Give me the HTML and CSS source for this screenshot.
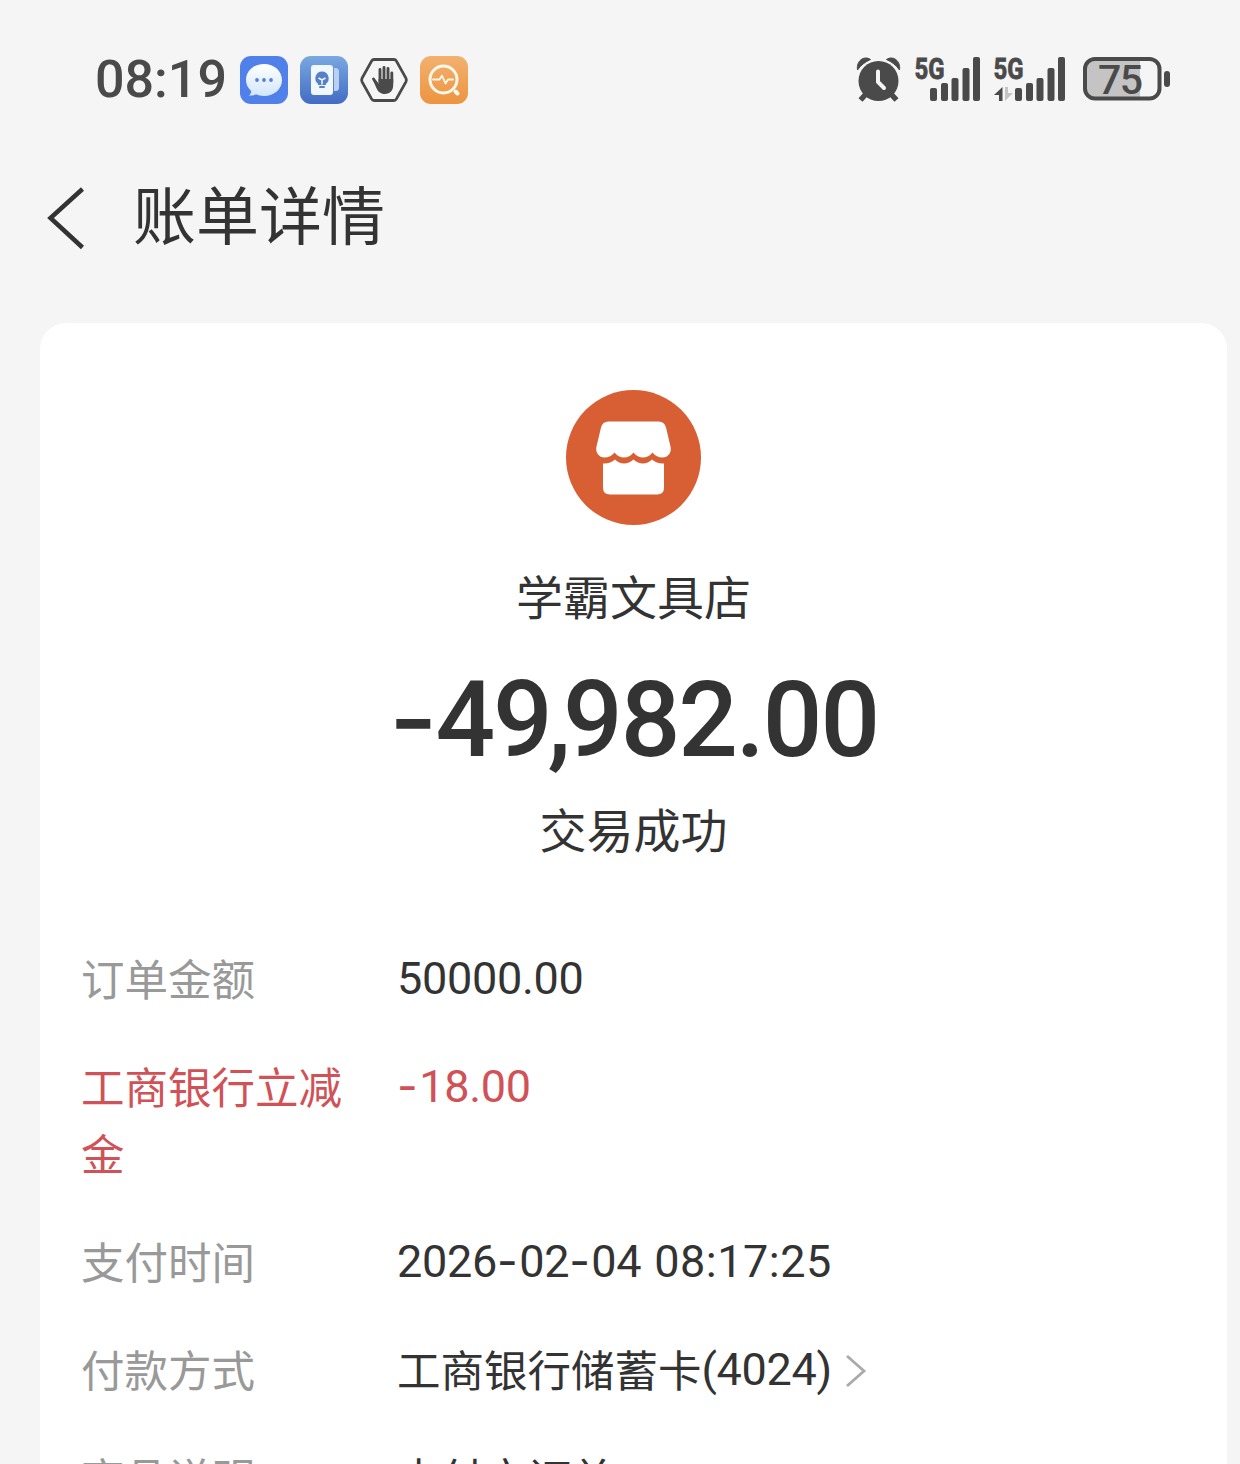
FILE: index.html
```html
<!DOCTYPE html>
<html lang="zh-CN">
<head>
    <meta charset="UTF-8">
    <title>账单详情</title>
    <link rel="stylesheet" href="styles.css">
</head>
<body>
    <div class="status-bar">
        <div class="status-left">
            <span class="clock">08:19</span>
            <svg class="app-icon" viewBox="0 0 48 48">
                <defs>
                    <linearGradient id="bubble" x1="0" y1="0" x2="0" y2="1">
                        <stop offset="0" stop-color="#fff"/>
                        <stop offset="1" stop-color="#d3e6fd"/>
                    </linearGradient>
                </defs>
                <rect width="48" height="48" rx="11" fill="#5080ea"/>
                <path d="M24 8c10.200 0 18 6.900 18 16s-7.800 16-18 16c-3 0-5.500-.6-8-1.700-1.800 1.200-4.300 1.500-7 1.200 1.600-1.200 2.200-2.800 2.200-4.500C7.800 32 6 28.300 6 24 6 14.900 13.800 8 24 8z" fill="url(#bubble)"/>
                <circle cx="17" cy="24" r="1.900" fill="#5282d8"/>
                <circle cx="24" cy="24" r="1.900" fill="#5282d8"/>
                <circle cx="31" cy="24" r="1.900" fill="#5282d8"/>
            </svg>
            <svg class="app-icon" viewBox="0 0 48 48">
                <defs>
                    <linearGradient id="tips" x1="0" y1="0" x2="0" y2="1">
                        <stop offset="0" stop-color="#7aa8e0"/>
                        <stop offset="1" stop-color="#416cc4"/>
                    </linearGradient>
                </defs>
                <rect width="48" height="48" rx="11" fill="url(#tips)"/>
                <path d="M34 12h1.500q3.500 0 3.500 3.500v16q0 3.500-3.500 3.500H34z" fill="#b9d0f2"/>
                <rect x="11" y="9" width="22" height="30" rx="3" fill="#f1f7ff"/>
                <path d="M22 15.500a6.800 6.800 0 0 1 4 12.200V29h-8v-1.300a6.800 6.800 0 0 1 4-12.200z" fill="#5580c8"/>
                <path d="M18.500 22l3.500 2 3.500-2M22 24v4.500" fill="none" stroke="#f1f7ff" stroke-width="1.500"/>
                <rect x="19" y="30" width="6" height="2" rx="1" fill="#5580c8"/>
            </svg>
            <svg class="app-icon" viewBox="0 0 48 48">
                <path d="M14 3.500h20q1.500 0 2.300 1.400l9.600 17.200q1 1.900 0 3.800l-9.600 17.200q-.8 1.400-2.300 1.400H14q-1.500 0-2.300-1.400L2.100 25.900q-1-1.900 0-3.800l9.600-17.200Q12.500 3.500 14 3.500z" fill="none" stroke="#4a4a4a" stroke-width="2.800"/>
                <path d="M17 28l-3.500-5M20 26V13.500M24 26V11.500M28 26V12.500M31.800 27V17" fill="none" stroke="#4a4a4a" stroke-width="2.900" stroke-linecap="round"/>
                <path d="M18.600 23h14.600v6c0 5.500-3 9-8.300 9-4.500 0-7-2.500-8.500-6l-3.300-7.500 2.500-.5 2.900 4z" fill="#4a4a4a"/>
            </svg>
            <svg class="app-icon" viewBox="0 0 48 48">
                <defs>
                    <linearGradient id="scan" x1="0" y1="0" x2="0" y2="1">
                        <stop offset="0" stop-color="#f2b16f"/>
                        <stop offset="1" stop-color="#ed9440"/>
                    </linearGradient>
                </defs>
                <rect width="48" height="48" rx="11" fill="url(#scan)"/>
                <g fill="none" stroke="#fff8ea" stroke-linecap="round">
                    <circle cx="23.500" cy="23.500" r="13.500" stroke-width="3"/>
                    <path d="M35.500 35.500l2 2" stroke-width="4"/>
                    <path d="M13 23.500h6.500l2.500-4 3.500 8 2.500-4h5" stroke-width="1.800" stroke-linejoin="round"/>
                </g>
            </svg>
        </div>
        <div class="status-right">
            <svg class="alarm" viewBox="0 0 44 46">
                <g fill="#4a4a4a">
                    <circle cx="21.500" cy="25" r="20"/>
                    <path d="M.5 14C-1 5 7-1 13.500 3.500 8 6 4 9 .5 14zM42.500 14C44 5 36-1 29.500 3.500 35 6 39 9 42.500 14z" stroke="#4a4a4a"/>
                </g>
                <path d="M9 38l-5.500 6M34 38l5.500 6" stroke="#4a4a4a" stroke-width="5.500"/>
                <path d="M21 15.500V26l6 6" fill="none" stroke="#f5f5f5" stroke-width="4" stroke-linecap="round"/>
            </svg>
            <svg class="signal signal-one" viewBox="0 0 66 46">
                <text x="-.5" y="22.500" textLength="30" lengthAdjust="spacingAndGlyphs">5G</text>
                <g fill="#4a4a4a">
                    <rect x="15" y="32" width="7" height="13" rx="2"/>
                    <rect x="26" y="27" width="7" height="18" rx="2"/>
                    <rect x="36.500" y="22" width="7" height="23" rx="2"/>
                    <rect x="47.500" y="12" width="7" height="33" rx="2"/>
                    <rect x="58" y="1" width="7" height="44" rx="2"/>
                </g>
            </svg>
            <svg class="signal signal-two" viewBox="0 0 72 46">
                <text x="-.5" y="22.500" textLength="30" lengthAdjust="spacingAndGlyphs">5G</text>
                <path d="M8.500 31v14H5v-6H0z" fill="#4a4a4a"/>
                <path d="M11 45V31h3v6h5z" fill="#c4c4c4"/>
                <g fill="#4a4a4a">
                    <rect x="21" y="32" width="7" height="13" rx="2"/>
                    <rect x="32" y="27" width="7" height="18" rx="2"/>
                    <rect x="42.500" y="22" width="7" height="23" rx="2"/>
                    <rect x="53.500" y="12" width="7" height="33" rx="2"/>
                    <rect x="64" y="1" width="7" height="44" rx="2"/>
                </g>
            </svg>
            <svg class="battery" viewBox="0 0 88 46">
                <path d="M12 3h45v40H12Q3 43 3 34V12Q3 3 12 3z" fill="#c4c4c4"/>
                <rect x="2" y="3" width="74.500" height="39.500" rx="10" fill="none" stroke="#4a4a4a" stroke-width="4"/>
                <rect x="81" y="15" width="6" height="16" rx="3" fill="#4a4a4a"/>
                <text x="15" y="38" textLength="45" lengthAdjust="spacing">75</text>
            </svg>
        </div>
    </div>

    <header class="nav">
        <svg class="back" viewBox="0 0 38 62">
            <path d="M35.500 2L3.500 31l32 29.500" fill="none" stroke="#333" stroke-width="4.500"/>
        </svg>
        <h1>账单详情</h1>
    </header>

    <main class="card">
        <div class="summary">
            <svg class="shop-logo" viewBox="0 0 135 135">
                <circle cx="67.500" cy="67.500" r="67.500" fill="#d75f33"/>
                <path d="M42.500 31.500h50q6 0 7.500 6l4.500 19c1.500 6-2.500 11-8 11q-6 0-10-5-4 5-9.500 5t-9.500-5q-4 5-9.500 5t-9.500-5q-4 5-10 5c-5.500 0-9.500-5-8-11l4.500-19q1.500-6 7.500-6z" fill="#fff"/>
                <path d="M37 73.500q7 .5 12-4 4 4 9 4t9.500-4q4.500 4 9.500 4t9-4q5 4.500 12 4v24q0 7-7 7H44q-7 0-7-7z" fill="#fff"/>
            </svg>
            <div class="shop-name">学霸文具店</div>
            <div class="amount"><span class="dash">-</span>49<span class="comma">,</span>982.00</div>
            <div class="state">交易成功</div>
        </div>

        <div class="details">
            <div class="row">
                <div class="label">订单金额</div>
                <div class="value">50000.00</div>
            </div>
            <div class="row discount">
                <div class="label">工商银行立减金</div>
                <div class="value"><span class="dash">-</span>18.00</div>
            </div>
            <div class="row">
                <div class="label">支付时间</div>
                <div class="value">2026<span class="dash">-</span>02<span class="dash">-</span>04 <span class="time">08:17:25</span></div>
            </div>
            <div class="row">
                <div class="label">付款方式</div>
                <div class="value"><span class="cn">工商银行储蓄卡</span>(4024)</div>
                <svg class="more" viewBox="0 0 22 34">
                    <path d="M2 2l17 15L2 32" fill="none" stroke="#aaa" stroke-width="2.800"/>
                </svg>
            </div>
            <div class="row">
                <div class="label">商品说明</div>
                <div class="value"><span class="cn">支付宝订单</span></div>
            </div>
        </div>
    </main>
</body>
</html>
```
FILE: styles.css
```css
* {
    box-sizing: border-box;
}

body {
    display: flex;
    flex-direction: column;
    margin: 0;
    height: 1464px;
    overflow: hidden;
    background: #f5f5f5;
    color: #333;
    font-family: Roboto, "Noto Sans CJK SC", sans-serif;
}

svg {
    display: block;
    flex: none;
    overflow: visible;
}

.status-bar {
    display: flex;
    flex: none;
    justify-content: space-between;
    height: 160px;
    padding: 0 69px 0 95px;
}

.status-left {
    display: flex;
    align-items: center;
    gap: 12px;
}

.clock {
    width: 133px;
    color: #4a4a4a;
    font-size: 52px;
    font-weight: 500;
    line-height: 60px;
    white-space: nowrap;
}

.app-icon {
    width: 48px;
    height: 48px;
}

.status-right {
    display: flex;
    align-items: center;
    padding-bottom: 2px;
}

.status-right text {
    fill: #4a4a4a;
    font-family: Roboto, sans-serif;
}

.alarm {
    width: 44px;
    height: 46px;
    margin-right: 14px;
}

.signal {
    height: 46px;
}

.signal text {
    font-size: 29px;
    font-weight: 700;
    stroke: #4a4a4a;
    stroke-width: 0.8px;
}

.signal-one {
    width: 66px;
    margin-right: 13px;
}

.signal-two {
    width: 72px;
    margin-right: 17px;
}

.battery {
    width: 88px;
    height: 46px;
}

.battery text {
    font-size: 41px;
    font-weight: 500;
}

.nav {
    display: flex;
    flex: none;
    align-items: center;
    height: 116px;
    padding-left: 47px;
}

.back {
    width: 38px;
    height: 62px;
    margin-right: 48px;
}

h1 {
    margin: 0;
    font-size: 63px;
    font-weight: 400;
    line-height: 90px;
}

.card {
    flex: 1;
    width: 1187px;
    min-height: 0;
    margin: 47px 0 0 40px;
    padding-top: 67px;
    border-radius: 26px 26px 0 0;
    background: #fff;
}

.summary {
    display: flex;
    flex-direction: column;
    align-items: center;
}

.shop-logo {
    width: 135px;
    height: 135px;
}

.shop-name,
.state {
    font-family: "Noto Sans CJK SC", sans-serif;
    font-size: 47px;
    line-height: 70px;
}

.shop-name {
    margin-top: 35px;
}

.amount {
    margin-top: 29px;
    font-size: 105px;
    font-weight: 500;
    line-height: 124px;
    letter-spacing: -2.1px;
}

.comma {
    margin-left: -3px;
    letter-spacing: -8px;
}

.dash {
    font-family: Inter, sans-serif;
    line-height: 1;
}

.state {
    margin-top: 10px;
}

.details {
    display: flex;
    flex-direction: column;
    gap: 41.5px;
    margin-top: 82px;
    padding-left: 41px;
    font-size: 43.5px;
    line-height: 66.5px;
}

.row {
    display: flex;
}

.label {
    width: 275px;
    margin-right: 41px;
    color: #999;
    font-family: "Noto Sans CJK SC", sans-serif;
}

.value {
    height: 66.5px;
    padding-top: 1px;
    font-size: 45px;
    letter-spacing: -0.3px;
    white-space: nowrap;
}

.value .dash {
    letter-spacing: 1.5px;
}

.time {
    margin-left: 2px;
    letter-spacing: 0.5px;
}

.cn {
    font-size: 43.5px;
    letter-spacing: 0;
    line-height: 1;
    vertical-align: -2px;
}

.discount,
.discount .label {
    color: #d05257;
}

.more {
    width: 22px;
    height: 34px;
    margin: 18px 0 0 13px;
}
```
